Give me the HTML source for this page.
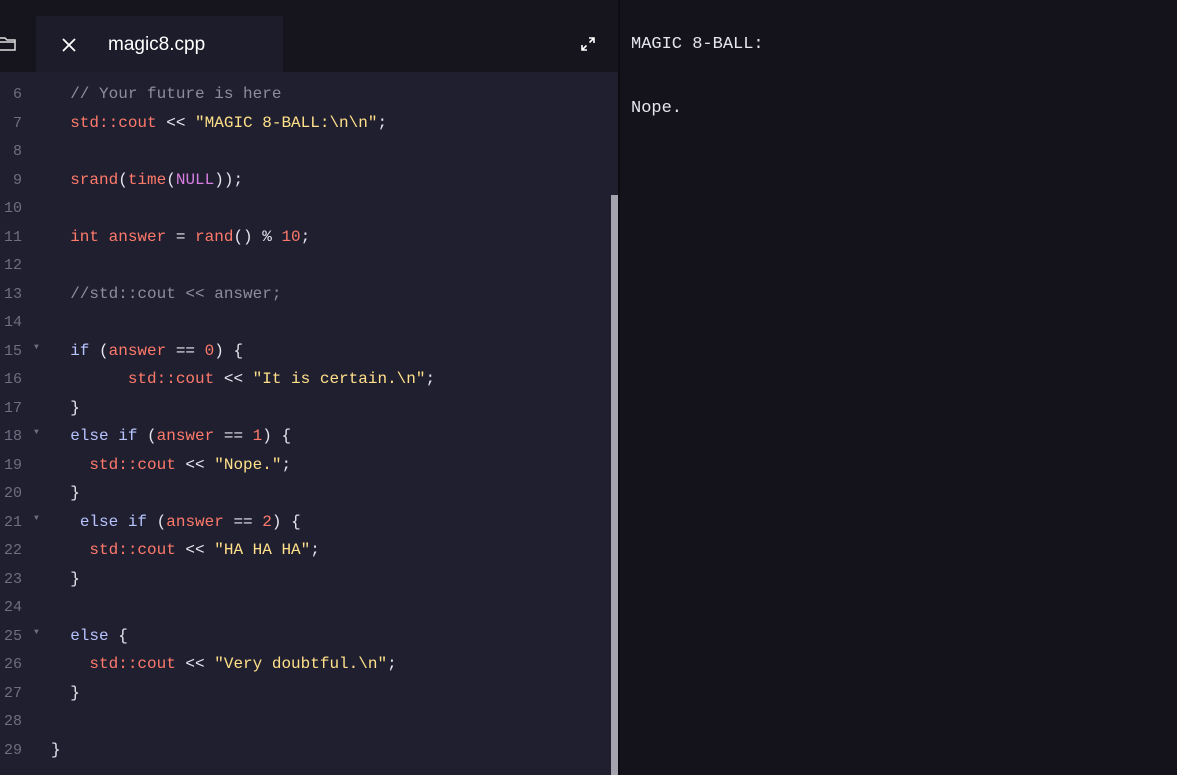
<!DOCTYPE html>
<html><head><style>
body{margin:0;width:1177px;height:775px;background:#15141d;overflow:hidden;font-family:"Liberation Mono",monospace;position:relative}
#top{position:absolute;left:0;top:0;width:618px;height:72px;background:#16151e}
#tab{position:absolute;left:36px;top:16px;width:247px;height:56px;background:#1d1c2a}
#ed{position:absolute;left:0;top:72px;width:618px;height:703px;background:#201f2f}
#right{position:absolute;left:618px;top:0;width:559px;height:775px;background:#14131b;border-left:2px solid #0d0c12}
.ln{position:absolute;left:0;width:22px;text-align:right;color:#6f6e80;font-size:15px}
.cd{position:absolute;left:51px;font-size:16px;color:#e6e6f0;white-space:pre}
.c{color:#8e8d9c}.r{color:#ff7a6b}.y{color:#ffe08a}.b{color:#b8c4ff}.m{color:#d57ee0}
.f{position:absolute;left:34px;color:#6f6e80;font-size:8px}
#sb{position:absolute;left:611px;top:195px;width:7px;height:580px;background:#a3a2ad}
.out{position:absolute;left:631px;color:#e6e6ee;font-size:17px;font-family:"Liberation Mono","Noto Sans CJK KR",monospace}
#code{position:absolute;left:0;top:2px}
</style></head><body>
<div id="top"></div>
<div id="tab"></div>
<svg style="position:absolute;left:0;top:36px" width="16" height="16"><path d="M-2 2h7l2 2h8v10h-17z M-2 6h17" fill="none" stroke="#ddd" stroke-width="1.5"/></svg>
<svg style="position:absolute;left:61px;top:37px" width="16" height="16"><path d="M2 2L14 14M14 2L2 14" stroke="#fff" stroke-width="1.8"/></svg>
<div style="position:absolute;left:108px;top:34px;color:#fff;font-family:'Liberation Sans',sans-serif;font-size:19px">magic8.cpp</div>
<svg style="position:absolute;left:580px;top:36px" width="16" height="16"><path d="M9 2h5v5M14 2L9.5 6.5M2 9v5h5M2 14l4.5-4.5" fill="none" stroke="#fff" stroke-width="1.6"/></svg>
<div id="ed"></div>
<div id="sb"></div>
<div id="right"></div>
<div class="out" style="top:35px">MAGIC 8-BALL:</div>
<div class="out" style="top:99px">Nope.</div>
<div id="code">
<div class="ln" style="top:84px">6</div><div class="cd" style="top:83px"><span class="c">  // Your future is here</span></div>
<div class="ln" style="top:113px">7</div><div class="cd" style="top:112px">  <span class="r">std::cout</span> &lt;&lt; <span class="y">"MAGIC 8-BALL:\n\n"</span>;</div>
<div class="ln" style="top:141px">8</div>
<div class="ln" style="top:170px">9</div><div class="cd" style="top:169px">  <span class="r">srand</span>(<span class="r">time</span>(<span class="m">NULL</span>));</div>
<div class="ln" style="top:198px">10</div>
<div class="ln" style="top:227px">11</div><div class="cd" style="top:226px">  <span class="r">int answer</span> = <span class="r">rand</span>() % <span class="r">10</span>;</div>
<div class="ln" style="top:255px">12</div>
<div class="ln" style="top:284px">13</div><div class="cd" style="top:283px"><span class="c">  //std::cout &lt;&lt; answer;</span></div>
<div class="ln" style="top:312px">14</div>
<div class="ln" style="top:341px">15</div><div class="f" style="top:341px">▼</div><div class="cd" style="top:340px">  <span class="b">if</span> (<span class="r">answer</span> == <span class="r">0</span>) {</div>
<div class="ln" style="top:369px">16</div><div class="cd" style="top:368px">        <span class="r">std::cout</span> &lt;&lt; <span class="y">"It is certain.\n"</span>;</div>
<div class="ln" style="top:398px">17</div><div class="cd" style="top:397px">  }</div>
<div class="ln" style="top:426px">18</div><div class="f" style="top:426px">▼</div><div class="cd" style="top:425px">  <span class="b">else if</span> (<span class="r">answer</span> == <span class="r">1</span>) {</div>
<div class="ln" style="top:455px">19</div><div class="cd" style="top:454px">    <span class="r">std::cout</span> &lt;&lt; <span class="y">"Nope."</span>;</div>
<div class="ln" style="top:483px">20</div><div class="cd" style="top:482px">  }</div>
<div class="ln" style="top:512px">21</div><div class="f" style="top:512px">▼</div><div class="cd" style="top:511px">   <span class="b">else if</span> (<span class="r">answer</span> == <span class="r">2</span>) {</div>
<div class="ln" style="top:540px">22</div><div class="cd" style="top:539px">    <span class="r">std::cout</span> &lt;&lt; <span class="y">"HA HA HA"</span>;</div>
<div class="ln" style="top:569px">23</div><div class="cd" style="top:568px">  }</div>
<div class="ln" style="top:597px">24</div>
<div class="ln" style="top:626px">25</div><div class="f" style="top:626px">▼</div><div class="cd" style="top:625px">  <span class="b">else</span> {</div>
<div class="ln" style="top:654px">26</div><div class="cd" style="top:653px">    <span class="r">std::cout</span> &lt;&lt; <span class="y">"Very doubtful.\n"</span>;</div>
<div class="ln" style="top:683px">27</div><div class="cd" style="top:682px">  }</div>
<div class="ln" style="top:711px">28</div>
<div class="ln" style="top:740px">29</div><div class="cd" style="top:739px">}</div>
</div>
</body></html>
